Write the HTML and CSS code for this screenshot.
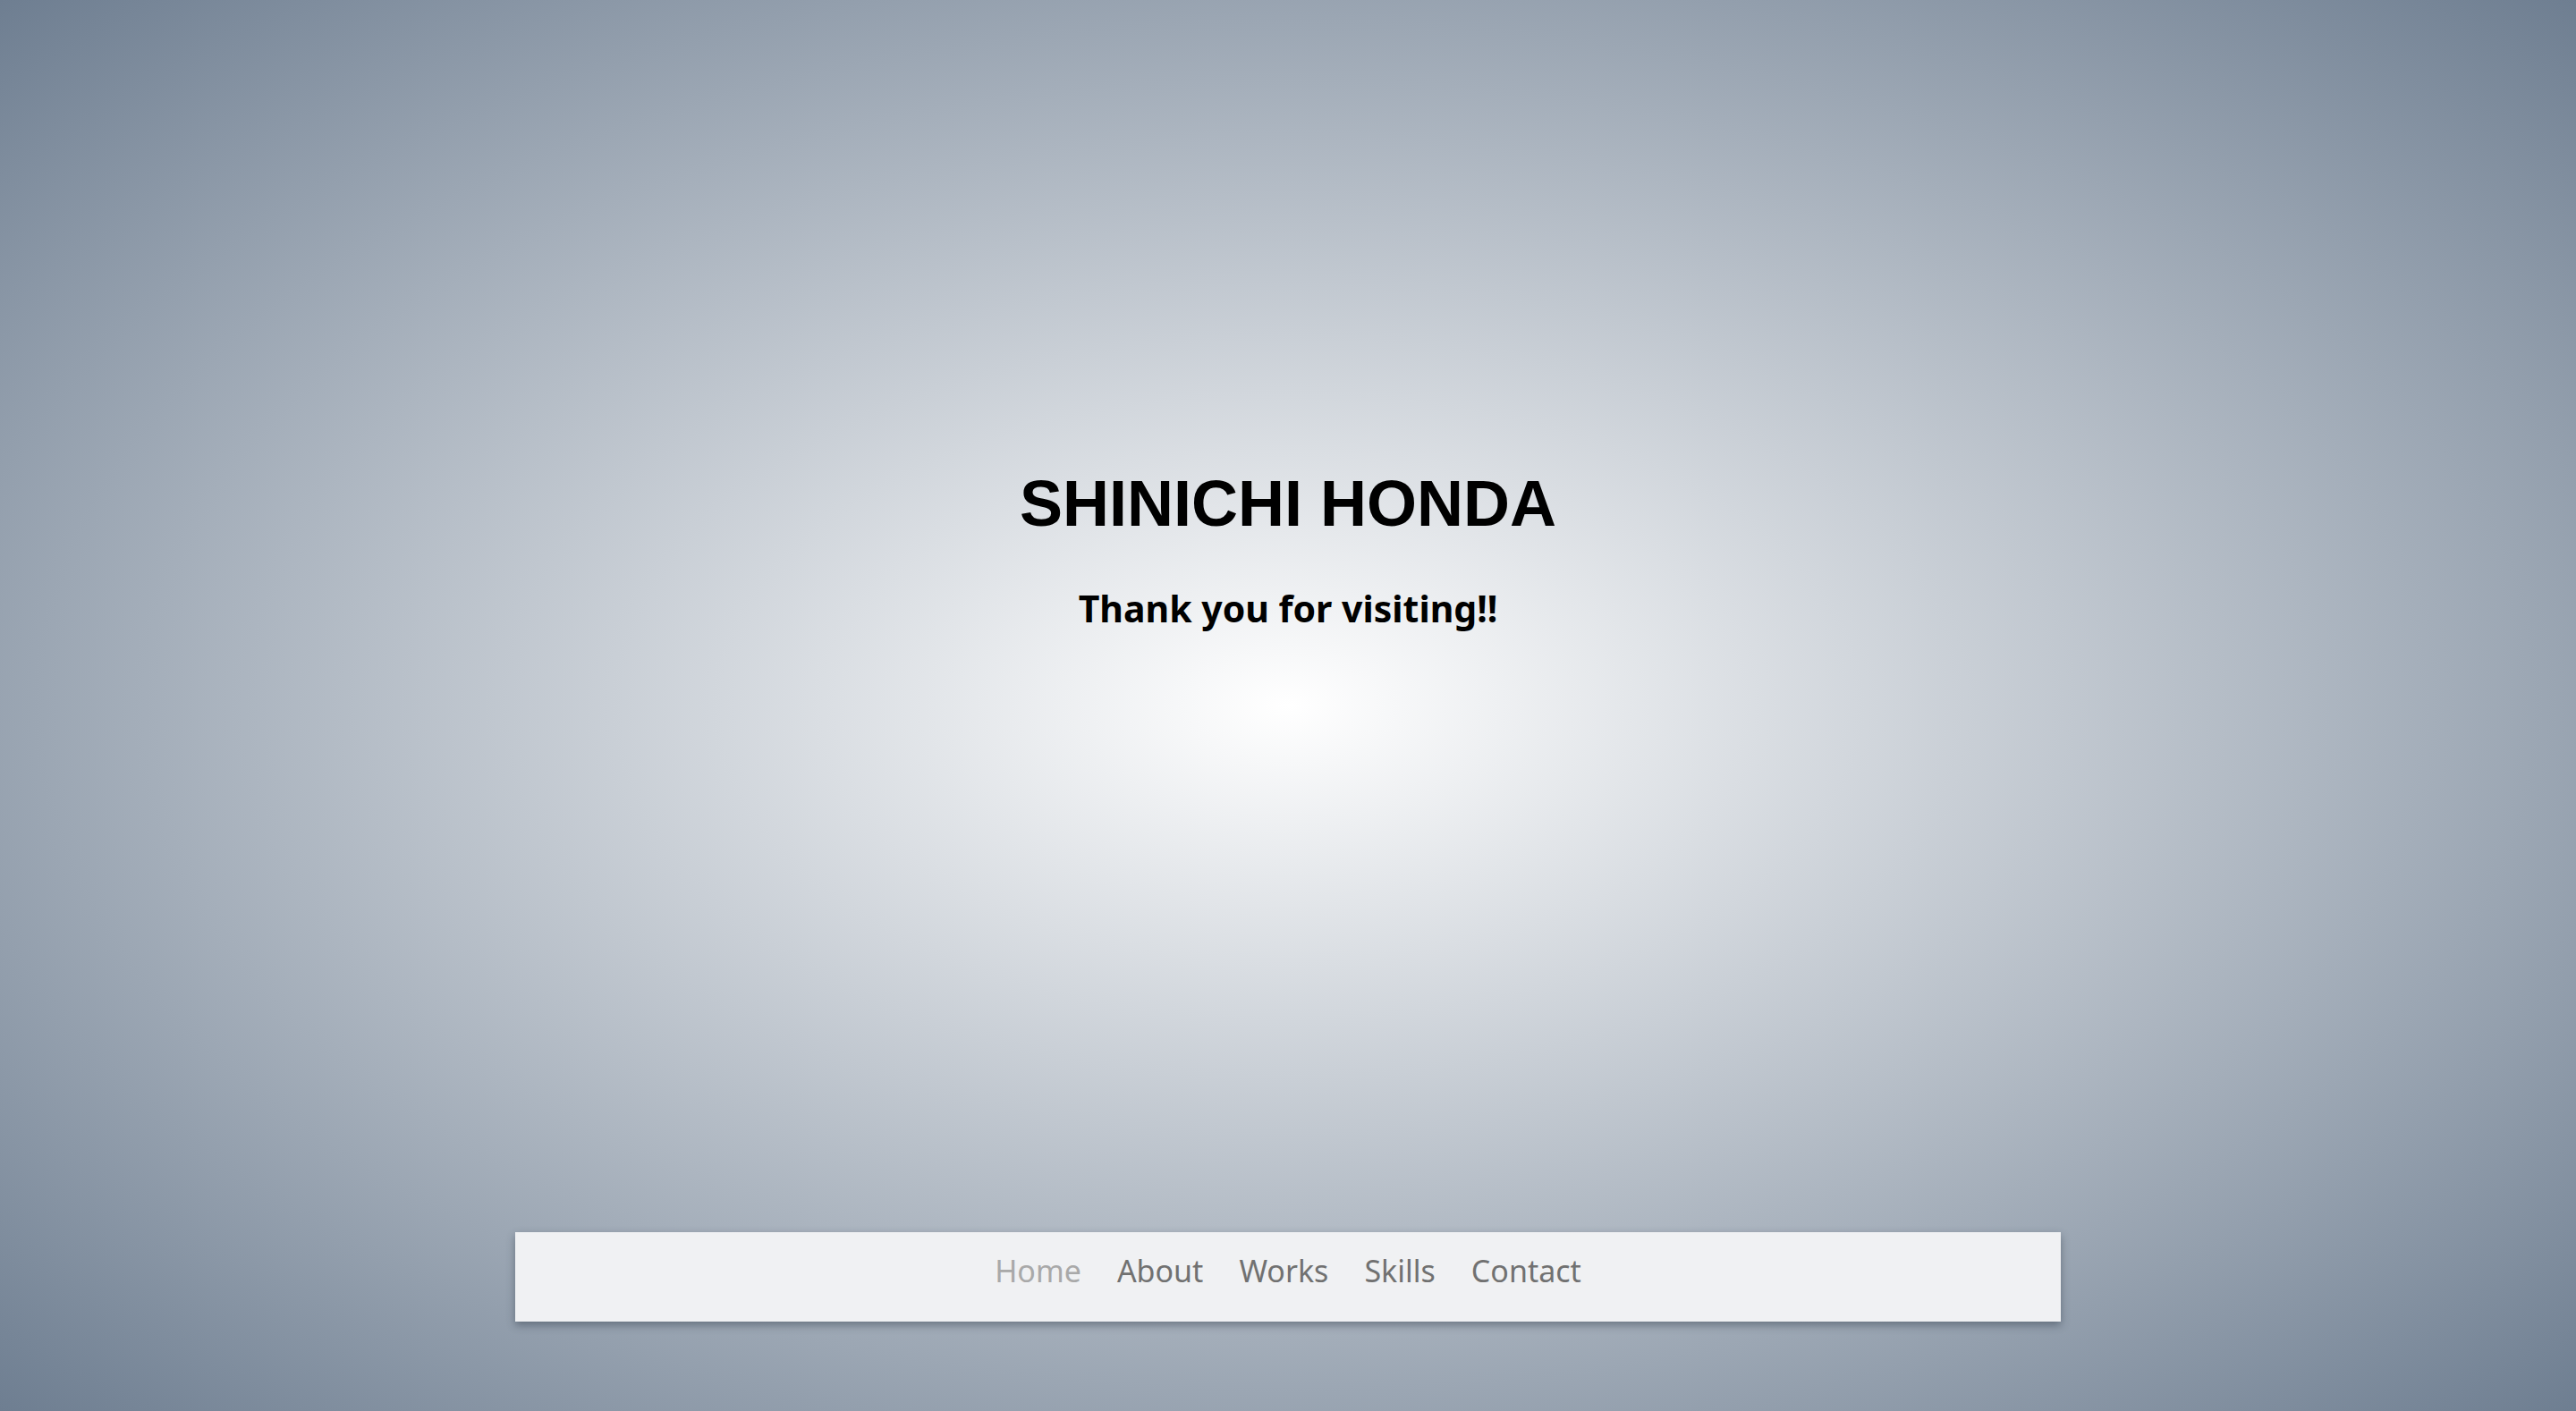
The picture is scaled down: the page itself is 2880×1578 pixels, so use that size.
FILE: index.html
```html
<!DOCTYPE html>
<html lang="en">
<head>
<meta charset="utf-8">
<title>SHINICHI HONDA</title>
<link rel="stylesheet" href="styles.css">
</head>
<body>
<div class="page">
  <header class="hero">
    <h1 class="title">SHINICHI HONDA</h1>
    <p class="subtitle">Thank you for visiting!!</p>
  </header>
  <nav class="nav">
    <ul class="nav-list">
      <li><a class="nav-link is-current" href="#">Home</a></li>
      <li><a class="nav-link" href="#">About</a></li>
      <li><a class="nav-link" href="#">Works</a></li>
      <li><a class="nav-link" href="#">Skills</a></li>
      <li><a class="nav-link" href="#">Contact</a></li>
    </ul>
  </nav>
</div>
</body>
</html>
```

FILE: styles.css
```css
html, body {
  margin: 0;
  padding: 0;
  height: 100%;
}
body {
  background: radial-gradient(ellipse farthest-corner at 50% 50%, #ffffff 0%, #6e7e91 100%);
  font-family: "Noto Sans", "Liberation Sans", sans-serif;
  overflow: hidden;
}
.page {
  height: 100vh;
  display: flex;
  flex-direction: column;
  align-items: center;
  box-sizing: border-box;
}
.hero {
  padding-top: 522px;
  display: flex;
  flex-direction: column;
  align-items: center;
}
.title {
  margin: 0;
  font-family: "Liberation Sans", Arial, sans-serif;
  font-weight: 700;
  font-size: 72px;
  line-height: 83px;
  color: #000;
}
.subtitle {
  margin: 54px 0 0;
  font-family: "Noto Sans", Roboto, sans-serif;
  font-weight: 700;
  font-size: 41px;
  line-height: 42px;
  color: #000;
}
.nav {
  margin-top: auto;
  margin-bottom: 100px;
  width: 1728px;
  height: 100px;
  box-sizing: border-box;
  padding-top: 20px;
  background: #f0f1f3;
  box-shadow: 0 4px 9px rgba(40, 50, 65, 0.45);
}
.nav-list {
  list-style: none;
  margin: 0;
  padding: 0;
  display: flex;
  justify-content: center;
  gap: 40px;
}
.nav-link {
  font-family: "Noto Sans", sans-serif;
  font-size: 34px;
  line-height: 46px;
  color: #717171;
  text-decoration: none;
}
.nav-link.is-current {
  color: #a9a9a9;
}
```
